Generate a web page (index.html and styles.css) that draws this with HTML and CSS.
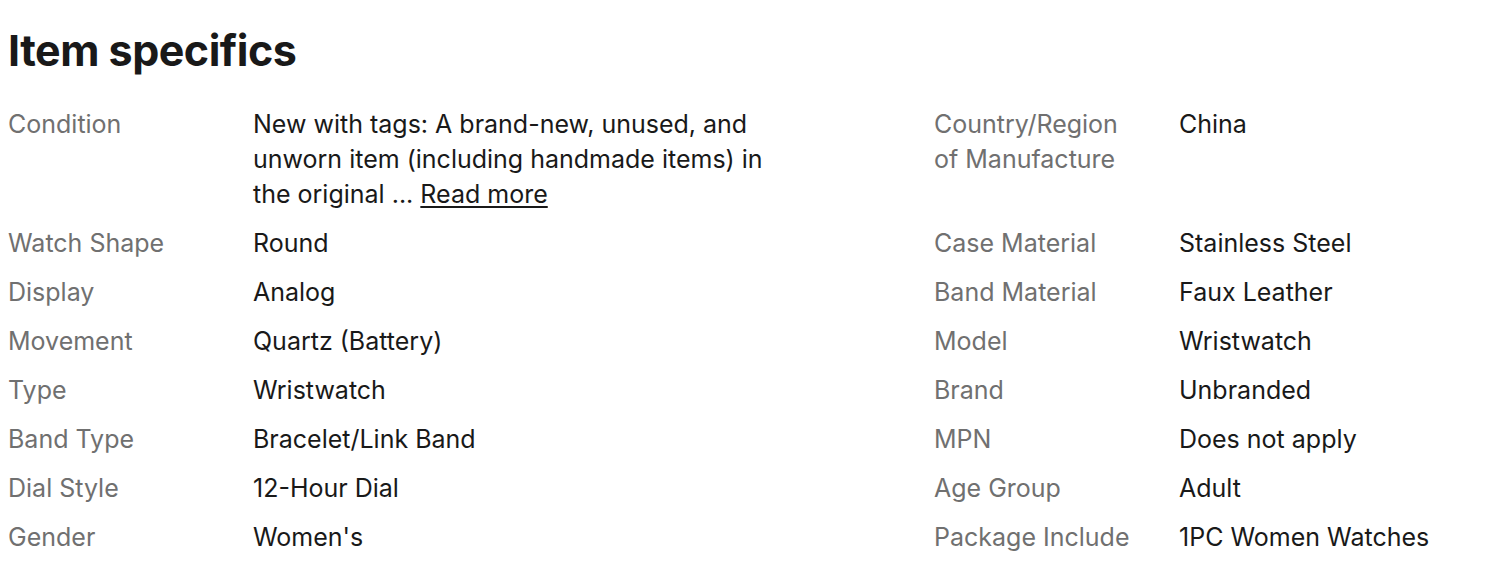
FILE: index.html
```html
<!DOCTYPE html>
<html lang="en">
<head>
<meta charset="utf-8">
<title>Item specifics</title>
<link rel="stylesheet" href="styles.css">
</head>
<body>
<section class="specs">
  <h2 class="specs-title">Item specifics</h2>
  <div class="specs-grid">
    <div class="label">Condition</div>
    <div class="value"><span class="value-text">New with tags: A brand-new, unused, and unworn item (including handmade items) in the original ... <a class="more" href="#">Read more</a></span></div>
    <div class="label">Country/Region of Manufacture</div>
    <div class="value">China</div>

    <div class="label">Watch Shape</div>
    <div class="value">Round</div>
    <div class="label">Case Material</div>
    <div class="value">Stainless Steel</div>

    <div class="label">Display</div>
    <div class="value">Analog</div>
    <div class="label">Band Material</div>
    <div class="value">Faux Leather</div>

    <div class="label">Movement</div>
    <div class="value">Quartz (Battery)</div>
    <div class="label">Model</div>
    <div class="value">Wristwatch</div>

    <div class="label">Type</div>
    <div class="value">Wristwatch</div>
    <div class="label">Brand</div>
    <div class="value">Unbranded</div>

    <div class="label">Band Type</div>
    <div class="value">Bracelet/Link Band</div>
    <div class="label">MPN</div>
    <div class="value">Does not apply</div>

    <div class="label">Dial Style</div>
    <div class="value">12-Hour Dial</div>
    <div class="label">Age Group</div>
    <div class="value">Adult</div>

    <div class="label">Gender</div>
    <div class="value">Women's</div>
    <div class="label">Package Include</div>
    <div class="value">1PC Women Watches</div>
  </div>
</section>
</body>
</html>
```

FILE: styles.css
```css
html, body {
  margin: 0;
  padding: 0;
  background: #ffffff;
}

body {
  font-family: Inter, "Liberation Sans", sans-serif;
  color: #191919;
}

.specs {
  padding: 20px 8px 0 8px;
}

.specs-title {
  margin: 0 0 27px 0;
  font-size: 43px;
  line-height: 60px;
  font-weight: 700;
  letter-spacing: -0.5px;
  color: #191919;
}

.specs-grid {
  display: grid;
  grid-template-columns: 245px 681px 245px 1fr;
  row-gap: 14px;
  font-size: 25px;
  line-height: 35px;
}

.label {
  color: #707070;
  padding-right: 40px;
}

.value {
  color: #191919;
}

.value-text {
  display: block;
  max-width: 530px;
}

.more {
  color: #191919;
  text-decoration: underline;
  text-underline-offset: 3px;
}
```
